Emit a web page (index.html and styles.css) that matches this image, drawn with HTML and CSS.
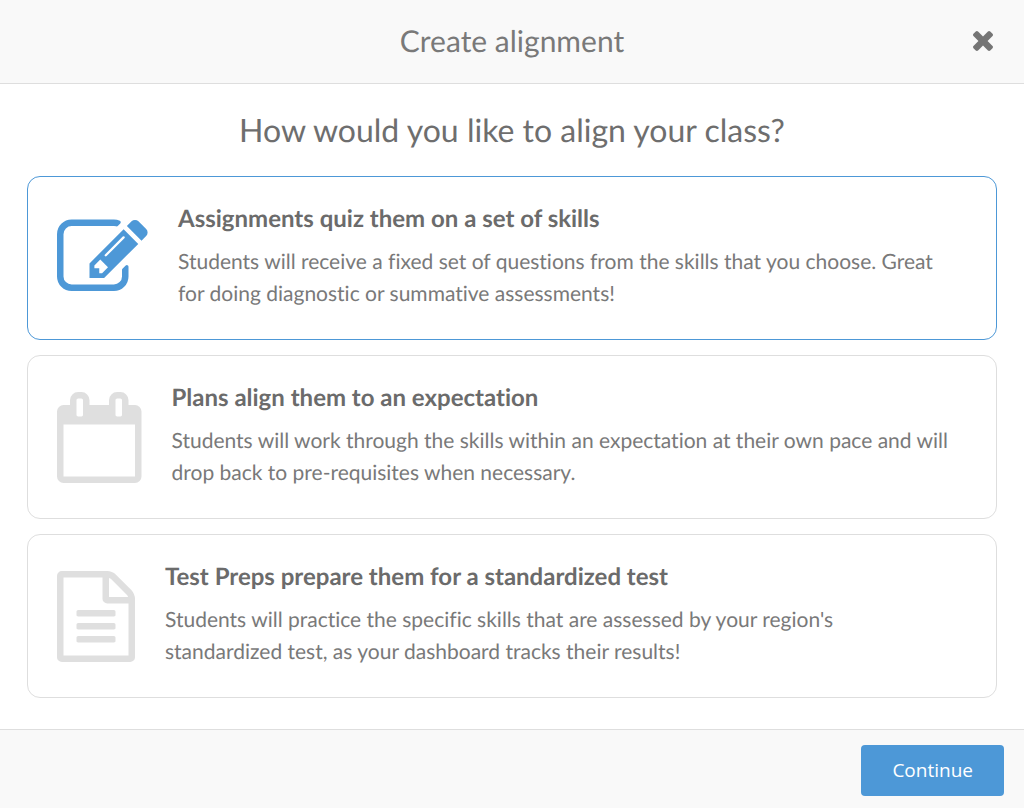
FILE: index.html
```html
<!DOCTYPE html>
<html lang="en">
<head>
<meta charset="utf-8">
<meta name="viewport" content="width=device-width, initial-scale=1">
<title>Create alignment</title>
<link rel="stylesheet" href="styles.css">
</head>
<body>
<form class="dialog">
  <header class="dialog-header">
    <h1 class="dialog-title">Create alignment</h1>
    <button class="close" type="button" aria-label="Close">
      <svg class="close-icon" viewBox="302 366 1188 1188" aria-hidden="true"><path d="M1490 1322q0 40-28 68l-136 136q-28 28-68 28t-68-28l-294-294-294 294q-28 28-68 28t-68-28l-136-136q-28-28-28-68t28-68l294-294-294-294q-28-28-28-68t28-68l136-136q28-28 68-28t68 28l294 294 294-294q28-28 68-28t68 28l136 136q28 28 28 68t-28 68l-294 294 294 294q28 28 28 68z"/></svg>
    </button>
  </header>
  <main class="dialog-body">
    <h2 class="question" id="question">How would you like to align your class?</h2>
    <div class="options" role="radiogroup" aria-labelledby="question">
      <label class="option">
        <input class="option-input" type="radio" name="alignment" value="assignment" checked>
        <svg class="option-icon" viewBox="0 0 1792 1792" aria-hidden="true"><path d="M888 1184l116-116-152-152-116 116v56h96v96h56zm440-720q-16-16-33 1l-350 350q-17 17-1 33t33-1l350-350q17-17 1-33zm80 594v190q0 119-84.500 203.500t-203.500 84.500h-832q-119 0-203.500-84.500t-84.500-203.500v-832q0-119 84.500-203.500t203.500-84.500h832q63 0 117 25 15 7 18 23 3 17-9 29l-49 49q-14 14-32 8-23-6-45-6h-832q-66 0-113 47t-47 113v832q0 66 47 113t113 47h832q66 0 113-47t47-113v-126q0-13 9-22l64-64q15-15 35-7t20 29zm-96-738l288 288-672 672h-288v-288zm444 132l-92 92-288-288 92-92q28-28 68-28t68 28l152 152q28 28 28 68t-28 68z"/></svg>
        <span class="option-text">
          <strong class="option-title">Assignments quiz them on a set of skills</strong>
          <span class="option-description">Students will receive a fixed set of questions from the skills that you choose. Great for doing diagnostic or summative assessments!</span>
        </span>
      </label>
      <label class="option">
        <input class="option-input" type="radio" name="alignment" value="plan">
        <svg class="option-icon" viewBox="64 0 1664 1792" aria-hidden="true"><path d="M192 1664h1408v-1024h-1408v1024zm384-1216v-288q0-14-9-23t-23-9h-64q-14 0-23 9t-9 23v288q0 14 9 23t23 9h64q14 0 23-9t9-23zm768 0v-288q0-14-9-23t-23-9h-64q-14 0-23 9t-9 23v288q0 14 9 23t23 9h64q14 0 23-9t9-23zm384-64v1280q0 52-38 90t-90 38h-1408q-52 0-90-38t-38-90v-1280q0-52 38-90t90-38h128v-96q0-66 47-113t113-47h64q66 0 113 47t47 113v96h384v-96q0-66 47-113t113-47h64q66 0 113 47t47 113v96h128q52 0 90 38t38 90z"/></svg>
        <span class="option-text">
          <strong class="option-title">Plans align them to an expectation</strong>
          <span class="option-description">Students will work through the skills within an expectation at their own pace and will drop back to pre-requisites when necessary.</span>
        </span>
      </label>
      <label class="option">
        <input class="option-input" type="radio" name="alignment" value="test-prep">
        <svg class="option-icon" viewBox="128 0 1536 1792" aria-hidden="true"><path d="M1596 380q28 28 48 76t20 88v1152q0 40-28 68t-68 28h-1344q-40 0-68-28t-28-68v-1600q0-40 28-68t68-28h896q40 0 88 20t76 48zm-444-244v376h376q-10-29-22-41l-313-313q-12-12-41-22zm384 1528v-1024h-416q-40 0-68-28t-28-68v-416h-768v1536h1280zm-1024-864q0-14 9-23t23-9h704q14 0 23 9t9 23v64q0 14-9 23t-23 9h-704q-14 0-23-9t-9-23v-64zm736 224q14 0 23 9t9 23v64q0 14-9 23t-23 9h-704q-14 0-23-9t-9-23v-64q0-14 9-23t23-9h704zm0 256q14 0 23 9t9 23v64q0 14-9 23t-23 9h-704q-14 0-23-9t-9-23v-64q0-14 9-23t23-9h704z"/></svg>
        <span class="option-text">
          <strong class="option-title">Test Preps prepare them for a standardized test</strong>
          <span class="option-description">Students will practice the specific skills that are assessed by your region's standardized test, as your dashboard tracks their results!</span>
        </span>
      </label>
    </div>
  </main>
  <footer class="dialog-footer">
    <button class="continue" type="submit">Continue</button>
  </footer>
</form>
</body>
</html>
```
FILE: styles.css
```css
* {
  box-sizing: border-box;
}

body {
  margin: 0;
  background: #fff;
  color: #797979;
  font-family: Lato, "Open Sans", sans-serif;
  font-variant-ligatures: none;
  text-rendering: geometricPrecision;
}

.dialog {
  display: flex;
  flex-direction: column;
  min-height: 100vh;
}

.dialog-header {
  display: grid;
  grid-template-columns: 1fr auto 1fr;
  align-items: center;
  padding: 21px 31px 22px;
  background: #f9f9f9;
  border-bottom: 1px solid #dedede;
}

.dialog-title {
  grid-column: 2;
  margin: 0;
  font-size: 30px;
  font-weight: 400;
  line-height: 40px;
}

.close {
  justify-self: end;
  display: flex;
  padding: 0;
  border: 0;
  background: none;
  color: #757575;
  cursor: pointer;
}

.close-icon {
  width: 20px;
  height: 20px;
  fill: currentColor;
}

.dialog-body {
  flex: 1;
  padding: 26px 27px 30px;
}

.question {
  margin: 0 0 26px;
  color: #6e6e6e;
  font-size: 32px;
  font-weight: 400;
  line-height: 40px;
  text-align: center;
}

.options {
  display: grid;
  gap: 15px;
}

.option {
  position: relative;
  display: flex;
  align-items: center;
  gap: 30px;
  padding: 27px 44px 27px 29px;
  border: 1px solid #dedede;
  border-radius: 13px;
  cursor: pointer;
}

.option:has(.option-input:checked) {
  border-color: #4d98d7;
}

.option-input {
  position: absolute;
  opacity: 0;
}

.option-icon {
  flex: none;
  height: 91px;
  fill: #dfdfdf;
}

.option-input:checked + .option-icon {
  fill: #4d98d7;
}

.option-text {
  display: grid;
  gap: 12px;
  padding-bottom: 2px;
}

.option-title {
  color: #6b6b6b;
  font-size: 24px;
  font-weight: 700;
  line-height: 30px;
}

.option-description {
  font-size: 21px;
  line-height: 32px;
}

.dialog-footer {
  display: flex;
  justify-content: flex-end;
  padding: 15px 20px 12px;
  background: #f9f9f9;
  border-top: 1px solid #dedede;
}

.continue {
  padding: 13px 31px;
  border: 0;
  border-radius: 4px;
  background: #4d98d7;
  color: #fff;
  font-family: "Open Sans", "Noto Sans", sans-serif;
  font-size: 19px;
  line-height: 25px;
  cursor: pointer;
}
```
